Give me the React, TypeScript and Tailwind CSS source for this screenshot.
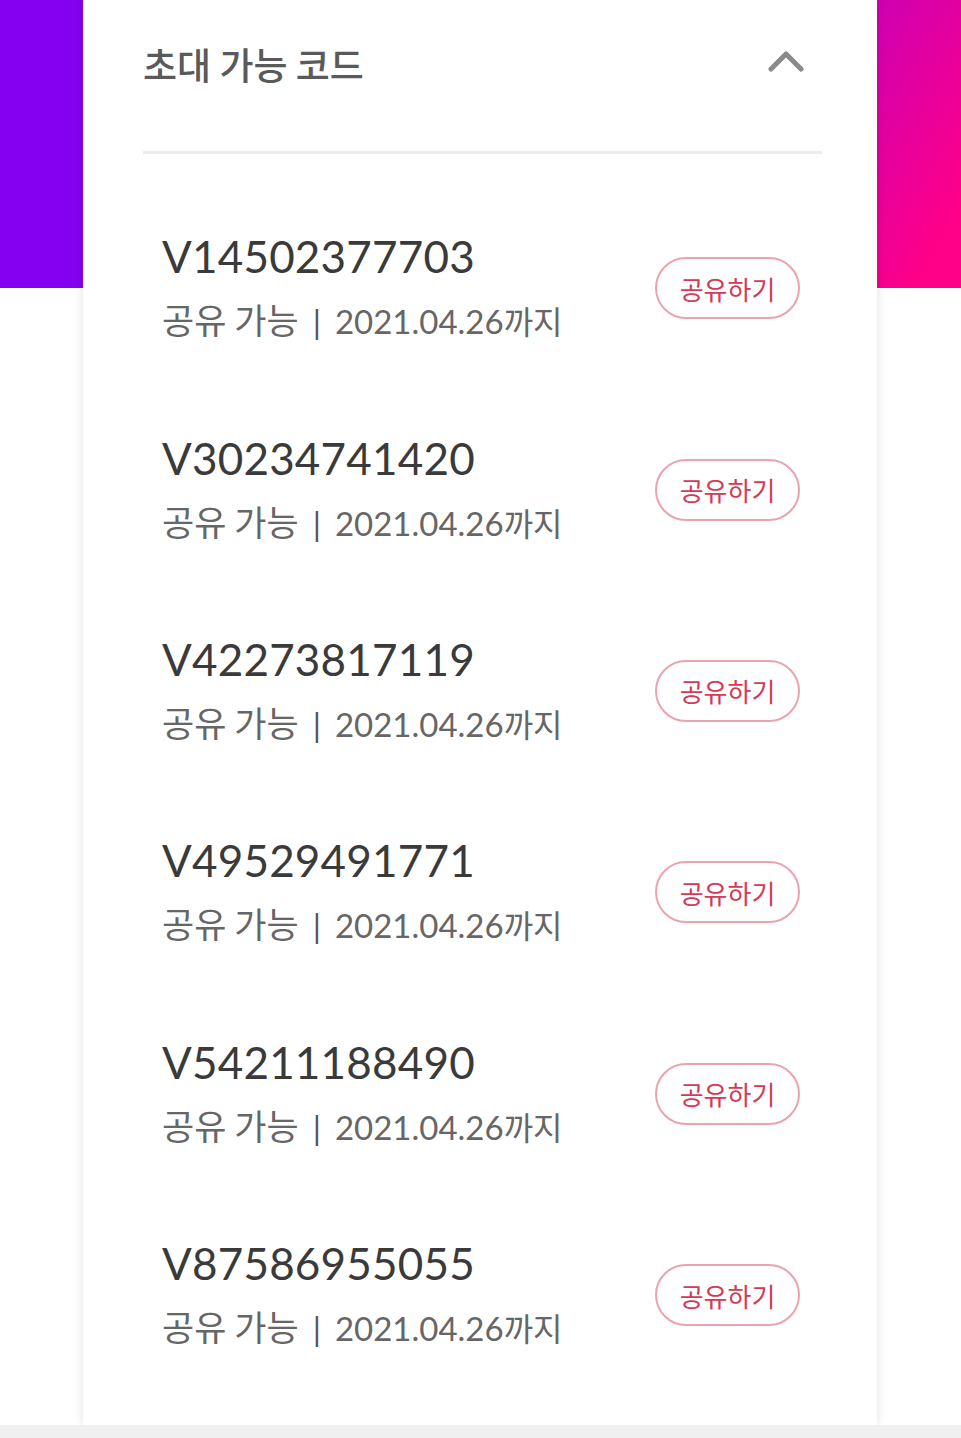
const codes = ['V14502377703', 'V30234741420', 'V42273817119', 'V49529491771', 'V54211188490', 'V87586955055']

function ChevronUp() {
  return (
    <svg width="36" height="24" viewBox="0 0 36 24" fill="none">
      <polyline
        points="3,20 18,5 33,20"
        stroke="#8a8a8a"
        strokeWidth="5"
        strokeLinecap="round"
        strokeLinejoin="round"
      />
    </svg>
  )
}

export default function App() {
  return (
    <div
      className="flex h-[1438px] w-full flex-col bg-white bg-[linear-gradient(120deg,#8500f0_50%,#ff0088_96%)] bg-[length:100%_288px] bg-no-repeat"
      style={{ fontFamily: 'Lato, "Noto Sans CJK KR", sans-serif' }}
    >
      <div className="ml-[83px] flex h-[1425px] w-[794px] flex-col bg-white pl-[60px] pr-[55px] shadow-[0_0_9px_rgba(0,0,0,0.13)]">
        {/* header */}
        <div className="flex h-[128px] items-center justify-between pr-[18px]">
          <h2 className="text-[37px] font-medium leading-none text-[#5a5a5a]" style={{ fontFamily: '"Noto Sans CJK KR", sans-serif' }}>
            초대 가능 코드
          </h2>
          <div className="mb-[6px]">
            <ChevronUp />
          </div>
        </div>
        <div className="mt-[23px] h-[3px] bg-[#ececec]" />

        {/* list */}
        <div className="flex flex-col pt-[31.5px]">
          {codes.map((code) => (
            <div key={code} className="flex h-[201.4px] items-center justify-between pl-[19px] pr-[22px]">
              <div className="flex flex-col">
                <p className="text-[44px] leading-[50px] tracking-[0.2px] text-[#3a3a3a]">{code}</p>
                <p className="mt-[18px] flex items-baseline text-[#666666]">
                  <span className="text-[35px] leading-[40px]" style={{ fontFamily: '"Noto Sans CJK KR", sans-serif' }}>
                    공유 가능
                  </span>
                  <span className="mx-[14px] text-[33px] leading-[40px] text-[#555555]">|</span>
                  <span className="text-[33px] leading-[40px]">2021.04.26</span>
                  <span className="text-[32px] leading-[40px]" style={{ fontFamily: '"Noto Sans CJK KR", sans-serif' }}>
                    까지
                  </span>
                </p>
              </div>
              <button
                className="mt-[4px] flex h-[62px] w-[145px] items-center justify-center rounded-full border-2 border-[#eba3ad] text-[26px] text-[#d43a55]"
                style={{ fontFamily: '"Noto Sans CJK KR", sans-serif' }}
              >
                공유하기
              </button>
            </div>
          ))}
        </div>
      </div>
      <div className="h-[13px] bg-[#f0f0f0]" />
    </div>
  )
}
